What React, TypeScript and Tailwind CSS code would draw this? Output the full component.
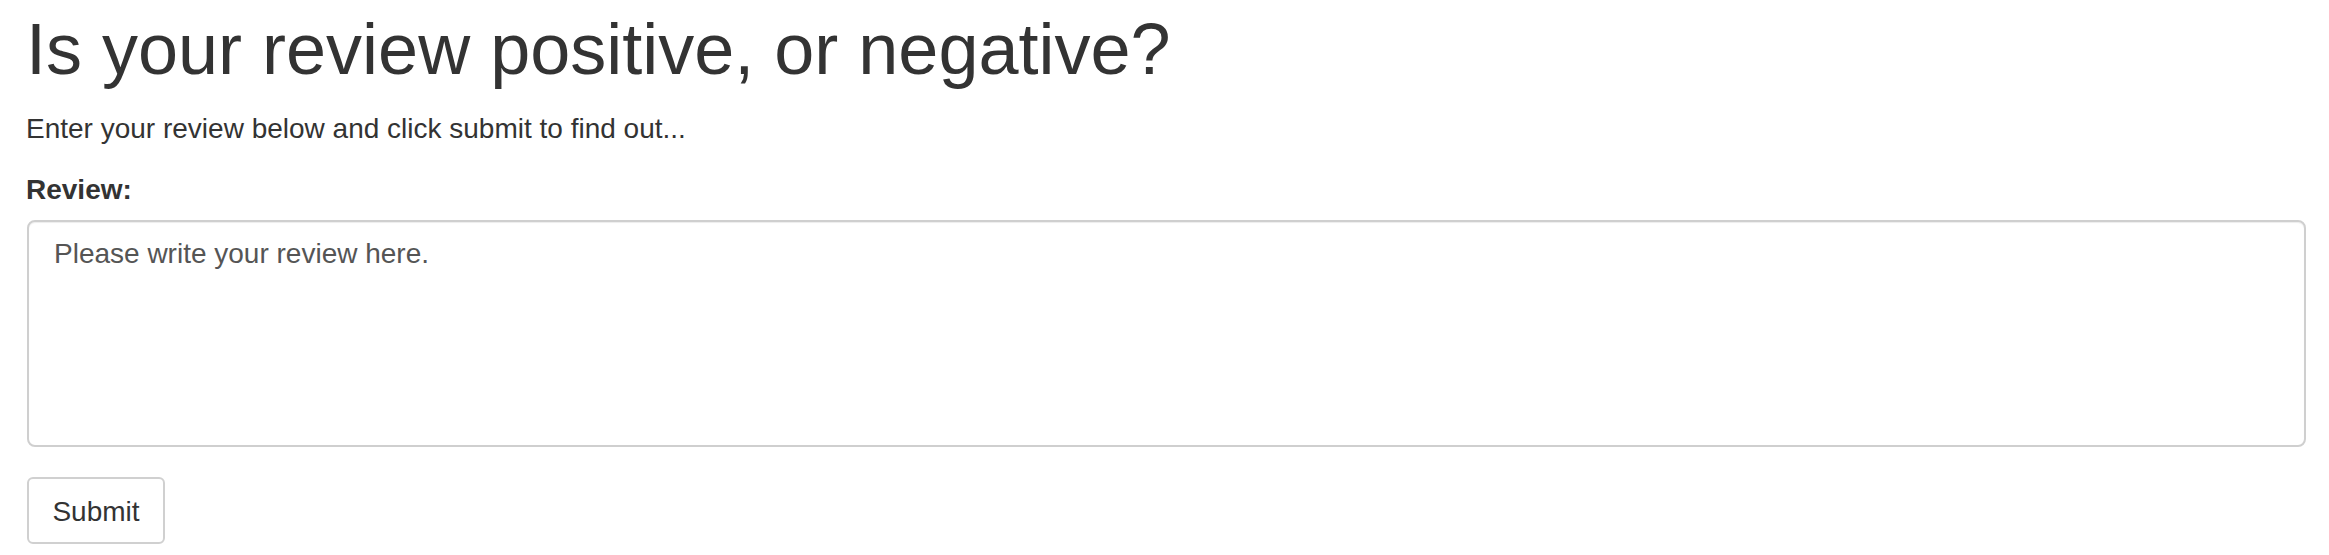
export default function App() {
  return (
    <div className="bg-white pl-[27px] pr-[23px] pt-[10px] pb-[11px] text-[#333] font-['Liberation_Sans',Arial,sans-serif]">
      {/* Heading */}
      <h1 className="text-[72px] leading-[79px] font-normal ml-[-1px]">
        Is your review positive, or negative?
      </h1>
      <p className="mt-[20px] text-[28px] leading-[40px] ml-[-1px]">
        Enter your review below and click submit to find out...
      </p>

      <form className="mt-[21px]" onSubmit={(e) => e.preventDefault()}>
        <label htmlFor="review" className="block text-[28px] leading-[40px] font-bold ml-[-1px]">
          Review:
        </label>
        <textarea
          id="review"
          defaultValue="Please write your review here."
          className="mt-[10px] block w-full h-[227px] resize-none rounded-[8px] border-2 border-[#cfcfcf] bg-white px-[25px] pt-[12px] text-[28px] leading-[40px] text-[#555] shadow-[inset_0_1px_1px_rgba(0,0,0,0.075)] outline-none font-['Liberation_Sans',Arial,sans-serif]"
        />
        <button
          type="submit"
          className="mt-[30px] block w-[138px] h-[67px] rounded-[6px] border-2 border-[#d0d0d0] bg-white pt-[13px] pb-[10px] text-center text-[28px] leading-[40px] text-[#333]"
        >
          Submit
        </button>
      </form>
    </div>
  );
}
